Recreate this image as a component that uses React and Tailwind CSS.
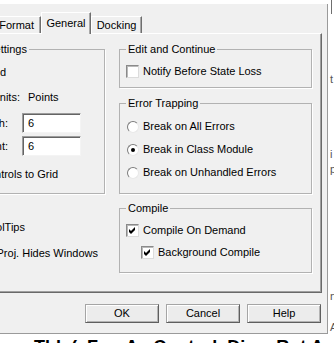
import React from 'react'

// little classic win32 controls
const CheckBox = ({ checked }) => (
  <span className="w-[13px] h-[13px] shrink-0 bg-white border border-t-[#8a8a8a] border-l-[#8a8a8a] border-r-[#dcdcdc] border-b-[#dcdcdc] shadow-[inset_1px_1px_0_#b9b9b9] flex items-center justify-center">
    {checked && (
      <svg width="9" height="9" viewBox="0 0 9 9">
        <polygon points="1,3 3,5 7,1 7,4 3,8 1,6" fill="#000" />
      </svg>
    )}
  </span>
)

const Radio = ({ on }) => (
  <span className="w-[12px] h-[12px] shrink-0 rounded-full bg-white border border-t-[#7c7c7c] border-l-[#7c7c7c] border-r-[#e8e8e8] border-b-[#e8e8e8] flex items-center justify-center">
    {on && <span className="w-[4px] h-[4px] rounded-full bg-black" />}
  </span>
)

const Btn = ({ label }) => (
  <button className="w-[74px] h-[19px] bg-[#ececec] border border-t-[#a5a5a5] border-l-[#a5a5a5] border-r-[#5f5f5f] border-b-[#5f5f5f] shadow-[inset_1px_1px_0_#ffffff,inset_-1px_-1px_0_#b4b4b4] flex items-center justify-center leading-[13px]">
    {label}
  </button>
)

const App = () => {
  return (
    <div className="w-[334px] h-[343px] overflow-hidden bg-white flex flex-col text-[11px] leading-[13px] text-black font-['Liberation_Sans',Arial,sans-serif]">
      <div className="flex h-[334px]">
        {/* dialog */}
        <div className="w-[328px] h-[330px] mt-[4px] bg-[#f0f0f0] border-r border-b border-[#9a9a9a] flex flex-col">
          {/* tabs */}
          <div className="h-[29px] flex items-end">
            <div className="w-[41px] h-[17px] border-t border-t-white border-r border-r-[#6e6e6e] shadow-[inset_-1px_0_0_#a8a8a8] flex items-center justify-end overflow-hidden whitespace-nowrap pr-[6px]">
              Format
            </div>
            <div className="relative z-10 w-[50px] h-[22px] -mb-[1px] bg-[#f0f0f0] border-t border-l border-white border-r border-r-[#6e6e6e] shadow-[inset_-1px_0_0_#a8a8a8] flex items-center justify-center pb-[1px]">
              General
            </div>
            <div className="w-[51px] h-[17px] border-t border-l border-white border-r border-r-[#6e6e6e] shadow-[inset_-1px_0_0_#a8a8a8] flex items-center justify-center">
              Docking
            </div>
          </div>

          {/* tab panel */}
          <div className="h-[260px] -ml-[3px] mr-[5px] border border-t-white border-l-white border-r-[#696969] border-b-[#696969] shadow-[inset_-1px_-1px_0_#a0a0a0] pt-[9px] pr-[9px] flex gap-[14px]">
            {/* left column, cut at the screen edge */}
            <div className="w-[107px] shrink-0 flex flex-col">
              <fieldset className="border border-[#b2b2b2] shadow-[1px_1px_0_#ffffff]">
                <legend className="pr-[2px]">
                  <span className="w-[28px] flex justify-end overflow-hidden whitespace-nowrap">Form Grid Settings</span>
                </legend>
                <div className="pt-[10px] pb-[12px] flex flex-col">
                  <div className="h-[13px] w-[7px] flex items-center justify-end overflow-hidden whitespace-nowrap">Show Grid</div>
                  <div className="h-[13px] mt-[12px] flex items-center">
                    <span className="w-[21px] flex justify-end overflow-hidden whitespace-nowrap">Grid Units:</span>
                    <span className="ml-[8px]">Points</span>
                  </div>
                  <div className="h-[20px] mt-[9px] flex items-center">
                    <span className="w-[9px] flex justify-end overflow-hidden whitespace-nowrap">Width:</span>
                    <div className="ml-[14px] w-[59px] h-[20px] bg-white border border-t-[#9c9c9c] border-l-[#9c9c9c] border-r-[#f4f4f4] border-b-[#f4f4f4] shadow-[inset_1px_1px_0_#646464] flex items-center pl-[5px]">6</div>
                  </div>
                  <div className="h-[20px] mt-[3px] flex items-center">
                    <span className="w-[9px] flex justify-end overflow-hidden whitespace-nowrap">Height:</span>
                    <div className="ml-[14px] w-[59px] h-[20px] bg-white border border-t-[#9c9c9c] border-l-[#9c9c9c] border-r-[#f4f4f4] border-b-[#f4f4f4] shadow-[inset_1px_1px_0_#646464] flex items-center pl-[5px]">6</div>
                  </div>
                  <div className="h-[13px] mt-[12px] w-[59px] flex items-center justify-end overflow-hidden whitespace-nowrap">Align Controls to Grid</div>
                </div>
              </fieldset>
              <div className="h-[13px] mt-[27px] w-[27px] flex items-center justify-end overflow-hidden whitespace-nowrap">Show ToolTips</div>
              <div className="h-[13px] mt-[13px] w-[100px] flex items-center justify-end overflow-hidden whitespace-nowrap">Collapse Proj. Hides Windows</div>
            </div>

            {/* right column */}
            <div className="w-[193px] shrink-0 flex flex-col">
              <fieldset className="border border-[#b2b2b2] shadow-[1px_1px_0_#ffffff] pl-[6px] pt-[9px] pb-[9px]">
                <legend className="px-[2px]">Edit and Continue</legend>
                <div className="h-[13px] flex items-center gap-[4px]">
                  <CheckBox />
                  <span>Notify Before State Loss</span>
                </div>
              </fieldset>

              <fieldset className="mt-[9px] border border-[#b2b2b2] shadow-[1px_1px_0_#ffffff] pl-[6px] pt-[10px] pb-[14px]">
                <legend className="px-[2px]">Error Trapping</legend>
                <div className="flex flex-col gap-[10px]">
                  <div className="h-[13px] flex items-center gap-[4px] pl-[1px]">
                    <Radio />
                    <span>Break on All Errors</span>
                  </div>
                  <div className="h-[13px] flex items-center gap-[4px] pl-[1px]">
                    <Radio on />
                    <span>Break in Class Module</span>
                  </div>
                  <div className="h-[13px] flex items-center gap-[4px] pl-[1px]">
                    <Radio />
                    <span>Break on Unhandled Errors</span>
                  </div>
                </div>
              </fieldset>

              <fieldset className="mt-[8px] border border-[#b2b2b2] shadow-[1px_1px_0_#ffffff] pl-[6px] pt-[9px] pb-[13px]">
                <legend className="px-[2px]">Compile</legend>
                <div className="flex flex-col gap-[9px]">
                  <div className="h-[13px] flex items-center gap-[4px]">
                    <CheckBox checked />
                    <span>Compile On Demand</span>
                  </div>
                  <div className="h-[13px] flex items-center gap-[4px] pl-[15px]">
                    <CheckBox checked />
                    <span>Background Compile</span>
                  </div>
                </div>
              </fieldset>
            </div>
          </div>

          {/* buttons */}
          <div className="pt-[11px] pr-[6px] flex justify-end gap-[7px]">
            <Btn label="OK" />
            <Btn label="Cancel" />
            <Btn label="Help" />
          </div>
        </div>

        {/* code window behind the dialog */}
        <div className="w-[6px] overflow-hidden flex flex-col text-[11px] leading-[13px] text-[#555] pl-[2px]">
          <div className="w-[1px] h-[15px] bg-[#6f6f6f] ml-[1px]" />
          <span className="mt-[59px] whitespace-nowrap">t</span>
          <span className="mt-[62px] whitespace-nowrap">i</span>
          <span className="mt-[2px] whitespace-nowrap">p</span>
          <span className="mt-[114px] whitespace-nowrap">n</span>
          <span className="mt-[18px] whitespace-nowrap">A</span>
        </div>
      </div>
      <div className="h-[9px] overflow-hidden">
        <div className="pt-[3px] pl-[2px] whitespace-nowrap font-bold text-[18px] leading-[20px]">
          -- .. Tbl_(sFrm As Control, Dim sRpt As Table)
        </div>
      </div>
    </div>
  )
}

export default App
